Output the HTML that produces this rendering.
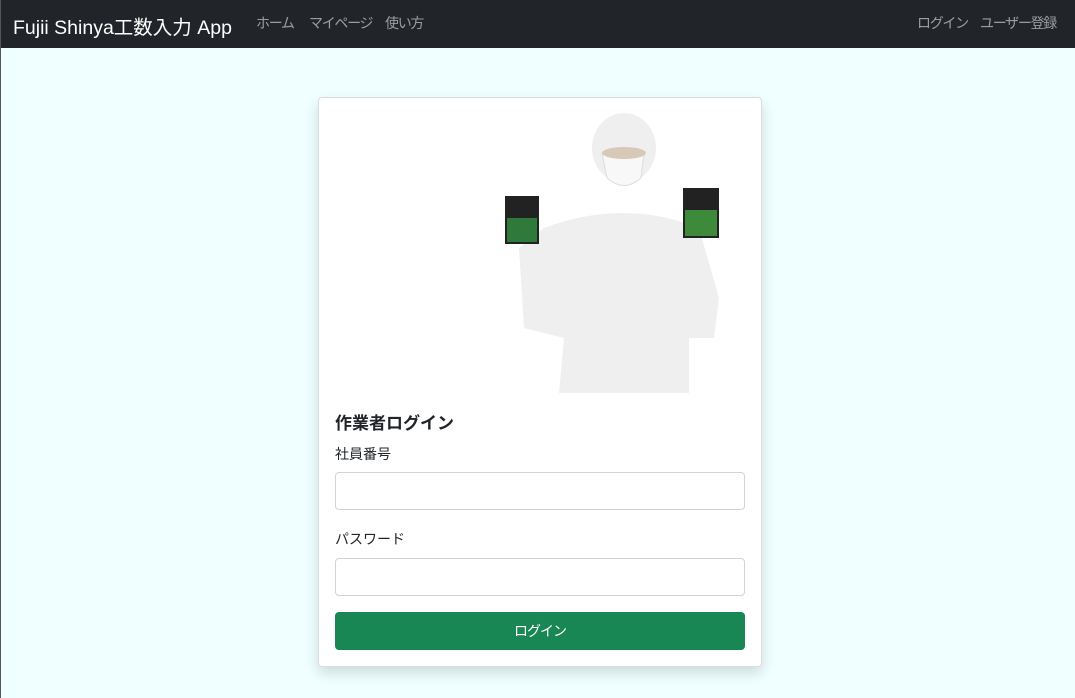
<!DOCTYPE html>
<html><head><meta charset="utf-8"><style>
*{box-sizing:border-box;margin:0;padding:0}
body{width:1075px;height:698px;background:#f0ffff;font-family:"Liberation Sans","Noto Sans CJK JP",sans-serif;position:relative;overflow:hidden}
.edge{position:absolute;left:0;top:0;width:1px;height:698px;background:#555}
.nav{height:48px;background:#212529;position:relative}
.brand{position:absolute;left:13px;top:11px;color:#fff;font-size:19.5px}
.l{position:absolute;top:13px;color:rgba(255,255,255,.55);font-size:14px;letter-spacing:-1.3px}
.card{position:absolute;left:318px;top:97px;width:444px;height:570px;background:#fff;border:1px solid #dcdcdc;border-radius:4px;box-shadow:0 6px 14px rgba(0,0,0,.15)}
.t{position:absolute;left:16px;top:311px;font-size:17px;font-weight:bold;color:#212529}
.lb{position:absolute;left:16px;font-size:14px;color:#212529}
.in{position:absolute;left:16px;width:410px;height:38px;border:1px solid #ced4da;border-radius:4px}
.btn{position:absolute;left:16px;top:514px;width:410px;height:38px;background:#198754;border-radius:4px;color:#fff;font-size:14px;text-align:center;line-height:38px;letter-spacing:-1px}
</style></head><body>
<div class="nav"><span class="brand">Fujii Shinya工数入力 App</span>
<span class="l" style="left:256px">ホーム</span><span class="l" style="left:309px">マイページ</span><span class="l" style="left:385px">使い方</span>
<span class="l" style="left:917px">ログイン</span><span class="l" style="left:980px">ユーザー登録</span></div>
<div class="edge"></div>
<div class="card">
<svg width="442" height="295" style="position:absolute;left:0;top:0">
<g fill="#efefef">
<ellipse cx="305" cy="50" rx="32" ry="35"/>
<path d="M225 130 Q305 100 380 130 L400 200 L395 240 L370 240 L370 295 L240 295 L245 240 L205 230 L200 150 Z"/>
</g>
<path d="M283 55 Q305 45 325 55 L322 80 Q305 95 288 80 Z" fill="#f8f8f8" stroke="#ddd"/>
<ellipse cx="305" cy="55" rx="22" ry="6" fill="#d8c8b8"/>
<rect x="186" y="98" width="34" height="48" fill="#222"/><rect x="188" y="120" width="30" height="24" fill="#2f7a3a"/>
<rect x="364" y="90" width="36" height="50" fill="#222"/><rect x="366" y="112" width="32" height="26" fill="#3c8a3a"/>
</svg>
<div class="t">作業者ログイン</div>
<div class="lb" style="top:346px">社員番号</div>
<div class="in" style="top:374px"></div>
<div class="lb" style="top:431px">パスワード</div>
<div class="in" style="top:460px"></div>
<div class="btn">ログイン</div>
</div>
</body></html>
